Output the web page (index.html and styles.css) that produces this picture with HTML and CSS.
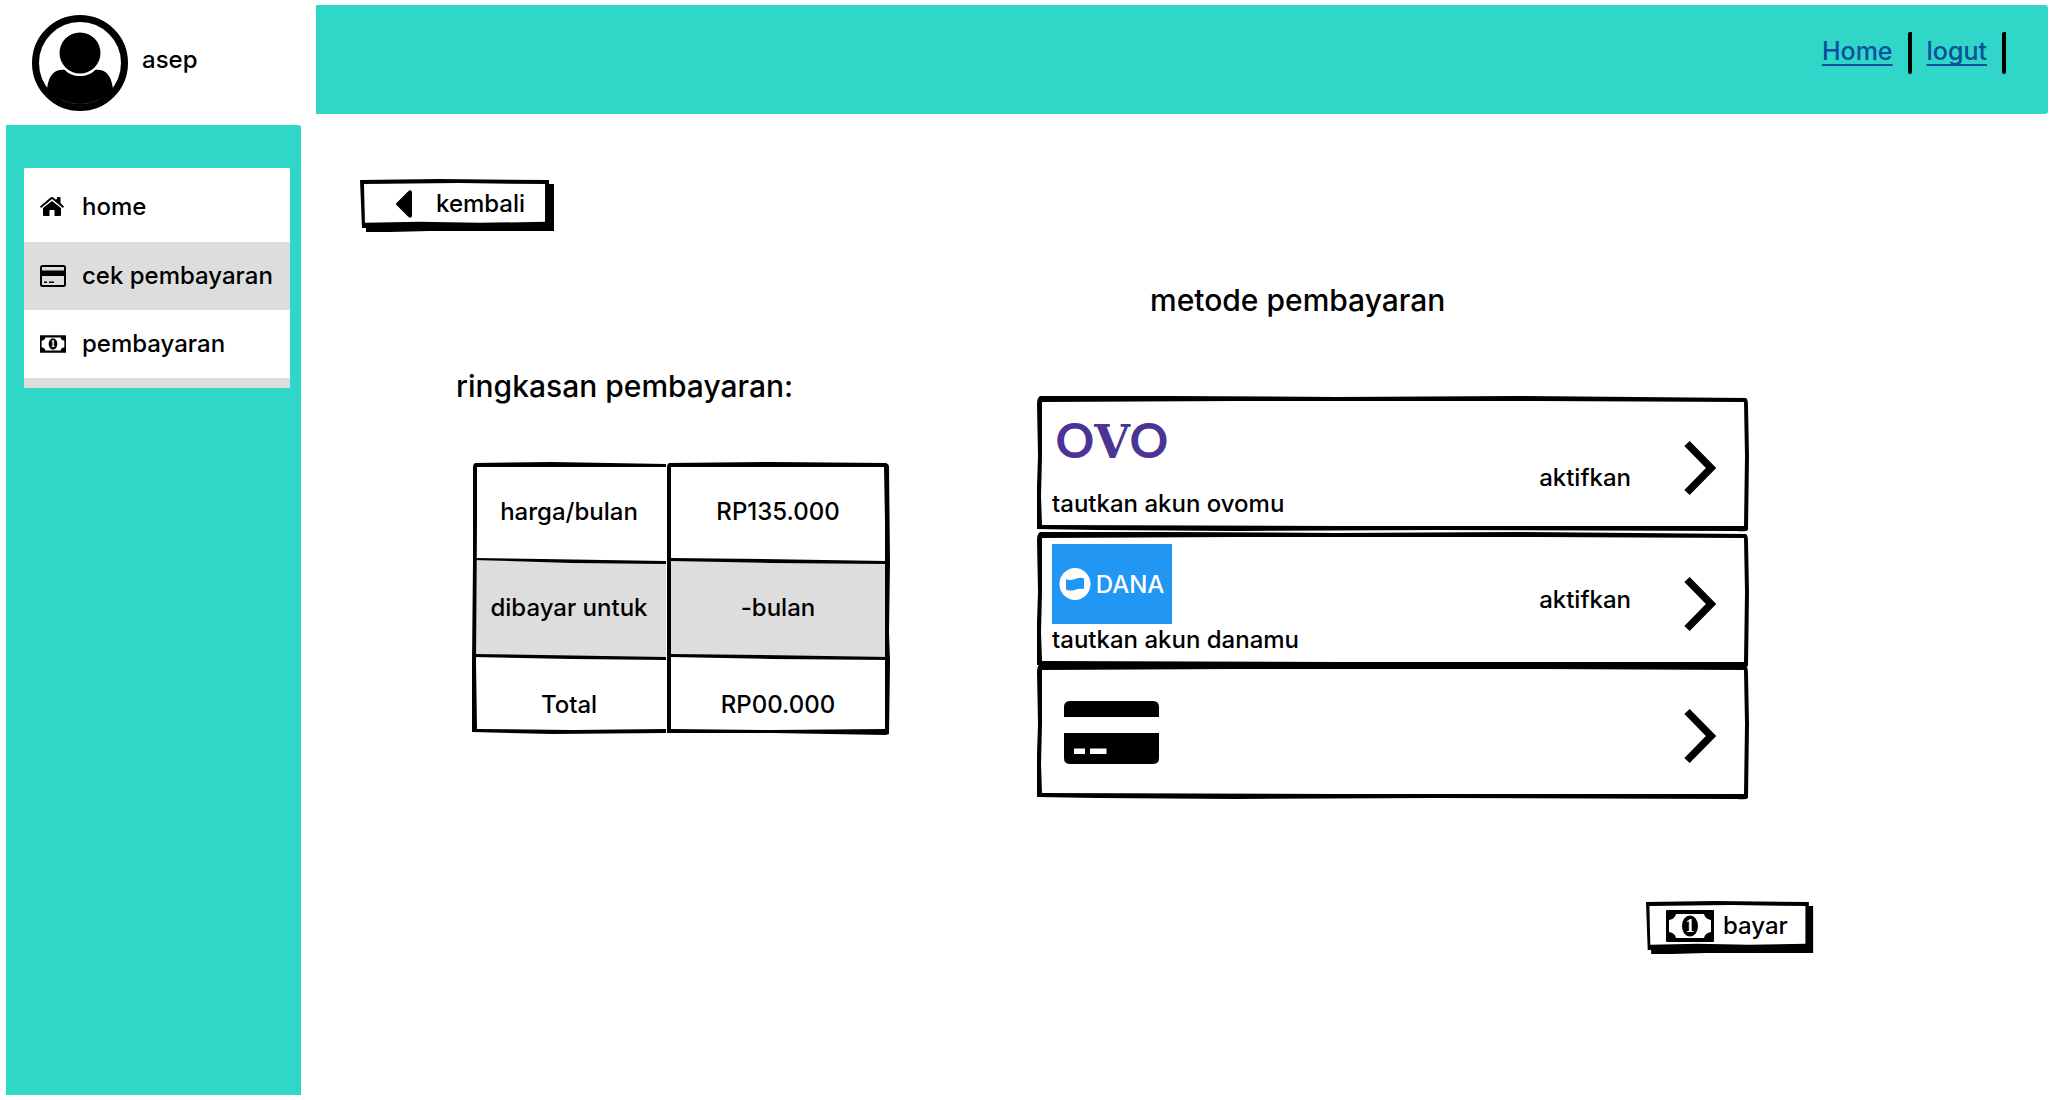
FILE: index.html
```html
<!DOCTYPE html>
<html lang="id">
<head>
<meta charset="utf-8">
<meta name="viewport" content="width=device-width, initial-scale=1">
<title>Pembayaran</title>
<link rel="stylesheet" href="styles.css">
</head>
<body>
<svg class="defs" aria-hidden="true">
  <symbol id="card-frame" viewBox="0 0 712 136" preserveAspectRatio="none">
    <path fill-rule="evenodd" d="M3 0L130 0L300 1L480 0L709 2Q711 3 711 10L712 60L711 134Q709 136 700 135L400 134L200 135L60 134L0 133L0 90L1 60L0 8Q0 2 3 0ZM5 6L5 60L4 100L5 129L300 130L707 130L708 60L707 6L500 5L360 5L200 5Z"/>
  </symbol>
  <symbol id="button-frame" viewBox="0 0 196 52" preserveAspectRatio="none">
    <path d="M6 5H195V51L70 51L30 52H6Z"/>
    <path d="M0 1L80 0L190 1V46L2 48Z"/>
    <path fill="#fff" d="M4 5L100 4L186 5V42L120 43L60 42L5 43Z"/>
  </symbol>
  <symbol id="banknote" viewBox="0 0 48 32">
    <path fill-rule="evenodd" d="M1 0H47Q48 0 48 1V31Q48 32 47 32H1Q0 32 0 31V1Q0 0 1 0ZM10 4Q9 9 3 10V22Q9 23 10 28H38Q39 23 45 22V10Q39 9 38 4Z"/>
    <ellipse cx="24" cy="16" rx="8" ry="10.500"/>
    <text x="24" y="22" text-anchor="middle" fill="#fff" font-family="Liberation Serif, serif" font-weight="700" font-size="18">1</text>
  </symbol>
  <symbol id="chevron" viewBox="0 0 32 56">
    <path d="M3 3.500L27 28L3 52.500" fill="none" stroke="#000" stroke-width="7.500"/>
  </symbol>
</svg>

<div class="page">
  <aside class="side">
    <div class="user">
      <svg class="avatar" viewBox="0 0 96 96" role="img" aria-label="Foto profil">
        <circle cx="48" cy="48" r="44.500" fill="#fff" stroke="#000" stroke-width="7"/>
        <circle cx="48" cy="38" r="20.500"/>
        <path d="M15 74C17 58 24 54 33 55C40 63 56 63 63 55C72 54 79 58 81 74A44 44 0 0 1 15 74Z"/>
      </svg>
      <span>asep</span>
    </div>
    <div class="panel">
      <nav class="menu" aria-label="Menu">
        <a class="menu-item menu-item--first" href="#home">
          <svg class="menu-icon" viewBox="0 0 26 22" aria-hidden="true"><path d="M17 3V1H20.500V7L24 10.500L23 12L12 3L1 12L0 10.500L10.500 1.500Q12 .500 13.500 1.500L15.500 3.500Z"/><path d="M12 5L21 12V19Q21 20 20 20H14.500V14H9.500V20H4Q3 20 3 19V12Z"/></svg>
          <span>home</span>
        </a>
        <a class="menu-item menu-item--alt" href="#cek">
          <svg class="menu-icon" viewBox="0 0 26 22" aria-hidden="true"><rect x="1" y="1" width="24" height="20" rx="1.500" fill="none" stroke="#000" stroke-width="2"/><path d="M1 5.500H25V11H1ZM4 16.500H7V18H4ZM9 16.500H14V18H9Z"/></svg>
          <span>cek pembayaran</span>
        </a>
        <a class="menu-item" href="#pembayaran">
          <svg class="menu-icon" aria-hidden="true"><use href="#banknote"/></svg>
          <span>pembayaran</span>
        </a>
      </nav>
    </div>
  </aside>

  <div class="body">
    <header class="topbar">
      <a href="#home">Home</a><span class="bar"></span>
      <a href="#logut">logut</a><span class="bar"></span>
    </header>
    <main class="content">
      <button class="btn btn--back" type="button">
        <svg class="frame" aria-hidden="true"><use href="#button-frame"/></svg>
        <svg class="back-icon" viewBox="0 0 16 28" aria-hidden="true"><path d="M1 12.500L12.500 1Q15 -1 16 2V26Q15 29 12.500 27L1 15.500Q-1 14 1 12.500Z"/></svg>
        <span>kembali</span>
      </button>
      <div class="columns">
        <section class="summary">
          <h2>ringkasan pembayaran:</h2>
          <div class="table-wrap">
            <svg class="frame" viewBox="0 0 418 274" preserveAspectRatio="none" aria-hidden="true">
              <path fill="#ddd" d="M1 97L194 101V196L1 193ZM198 97L414 101V196L198 193Z"/>
              <path d="M3 1L80 0L194 2V5L120 5L5 5L5 60L4 200L5 267L100 268L194 267V271L80 272L0 270L0 200L1 100L1 5Q1 2 3 1Z"/>
              <path d="M197 1L300 0L414 1Q417 2 417 5L418 100L417 170L418 200L417 272L414 273L300 271L195 271V200L195 100L195 5Q195 2 197 1ZM199 5V60L199 267L300 268L413 267V60L412 5L300 5Z" fill-rule="evenodd"/>
              <path d="M1 96L70 97L194 99V102L100 101L1 98ZM198 96L290 97L414 99V102L300 101L198 99ZM1 192L70 193L194 195V198L100 197L1 195ZM198 192L290 193L418 195V198L300 197L198 195Z"/>
            </svg>
            <table>
              <tr><th scope="row">harga/bulan</th><td>RP135.000</td></tr>
              <tr><th scope="row">dibayar untuk</th><td>-bulan</td></tr>
              <tr class="last"><th scope="row">Total</th><td>RP00.000</td></tr>
            </table>
          </div>
        </section>
        <section class="methods">
          <h2>metode pembayaran</h2>
          <ul class="cards">
            <li class="card card--ovo">
              <svg class="frame" aria-hidden="true"><use href="#card-frame"/></svg>
              <div class="brand">
                <svg class="logo" viewBox="0 0 120 80" role="img" aria-label="OVO"><text class="ovo" y="50" text-anchor="middle"><tspan x="23">O</tspan><tspan class="ovo-v" x="60">V</tspan><tspan x="97">O</tspan></text></svg>
                <span>tautkan akun ovomu</span>
              </div>
              <span class="status">aktifkan</span>
              <button class="go" type="button" aria-label="Pilih OVO"><svg><use href="#chevron"/></svg></button>
            </li>
            <li class="card">
              <svg class="frame" aria-hidden="true"><use href="#card-frame"/></svg>
              <div class="brand">
                <svg class="logo" viewBox="0 0 120 80" role="img" aria-label="DANA">
                  <rect width="120" height="80" fill="#2296f3"/>
                  <ellipse cx="23" cy="40" rx="15.500" ry="16" fill="#fff"/>
                  <path fill="#2296f3" d="M14 35Q18 37 23 35Q28 33 31 34Q32 34 32 35V45Q27 44 23 46Q19 47 15 46Q14 46 14 45Z"/>
                  <text class="dana" x="78" y="49" text-anchor="middle">DANA</text>
                </svg>
                <span>tautkan akun danamu</span>
              </div>
              <span class="status">aktifkan</span>
              <button class="go" type="button" aria-label="Pilih DANA"><svg><use href="#chevron"/></svg></button>
            </li>
            <li class="card card--credit">
              <svg class="frame" aria-hidden="true"><use href="#card-frame"/></svg>
              <div class="brand">
                <svg class="logo logo--card" viewBox="0 0 120 112" role="img" aria-label="Kartu kredit"><path d="M12 41V31Q12 25 18 25H101Q107 25 107 31V41ZM12 57H107V82Q107 88 101 88H18Q12 88 12 82Z"/><path fill="#fff" d="M22 72.500H33V78H22ZM38 72.500H54.500V78H38Z"/></svg>
              </div>
              <button class="go" type="button" aria-label="Pilih kartu"><svg><use href="#chevron"/></svg></button>
            </li>
          </ul>
          <button class="btn btn--pay" type="button">
            <svg class="frame" aria-hidden="true"><use href="#button-frame"/></svg>
            <svg class="pay-icon" aria-hidden="true"><use href="#banknote"/></svg>
            <span>bayar</span>
          </button>
        </section>
      </div>
    </main>
  </div>
</div>
</body>
</html>
```
FILE: styles.css
```css
* { box-sizing: border-box; }
body {
  margin: 0;
  background: #fff;
  color: #000;
  font: 500 24px/32px Inter, "Open Sans", sans-serif;
}
h2 { margin: 0; font-size: 30px; line-height: 40px; font-weight: 500; white-space: nowrap; }
button { font: inherit; color: inherit; background: none; border: 0; padding: 0; cursor: pointer; }
svg { display: block; }
.defs { display: none; }

.page {
  display: grid;
  grid-template-columns: 295px 1fr;
  gap: 15px;
  min-height: 100vh;
  padding: 5px 6px;
}

.side { display: flex; flex-direction: column; }
.user {
  display: flex;
  align-items: center;
  gap: 14px;
  height: 120px;
  padding: 0 26px 4px;
}
.user span { padding-bottom: 6px; }
.avatar { width: 96px; height: 96px; }
.panel {
  flex: 1;
  padding: 43px 11px 0 18px;
  background: #30d6c8;
  border-radius: 0 3px 0 0;
}
.menu {
  background: #fff;
  border-bottom: 10px solid #ddd;
}
.menu-item {
  display: flex;
  align-items: center;
  gap: 16px;
  height: 68px;
  padding-left: 16px;
  color: inherit;
  text-decoration: none;
  white-space: nowrap;
}
.menu-item--first { height: 74px; padding-top: 4px; }
.menu-item--alt { background: #ddd; }
.menu-icon { width: 26px; height: 22px; flex: none; }

.topbar {
  display: flex;
  justify-content: flex-end;
  gap: 13px;
  height: 109px;
  padding: 27px 42px 0 0;
  background: #30d6c8;
  border-radius: 0 3px 3px 0;
  font-size: 25px;
}
.topbar a {
  align-self: flex-start;
  padding: 3px 2px;
  color: #0b4f9c;
  text-decoration-thickness: 2px;
  text-underline-offset: 4px;
  text-decoration-skip-ink: none;
}
.bar { width: 4px; height: 42px; background: #000; border-radius: 2px 0 2px 2px; }

.content { padding: 65px 44px 0; }
.frame { position: absolute; inset: 0; width: 100%; height: 100%; z-index: -1; }
.btn {
  position: relative;
  z-index: 0;
  display: flex;
  align-items: center;
  height: 53px;
  padding-bottom: 3px;
}
.btn--back { width: 195px; padding-left: 36px; gap: 24px; }
.back-icon { width: 16px; height: 28px; }

.columns {
  display: grid;
  grid-template-columns: 677fr 967fr;
  padding-top: 48px;
}
.summary { padding: 86px 0 0 96px; }
.table-wrap {
  position: relative;
  z-index: 0;
  width: 418px;
  margin: 56px 0 0 16px;
}
table { width: 100%; border-collapse: collapse; table-layout: fixed; }
th, td { height: 96px; padding: 4px 0 0; font-weight: 500; text-align: center; white-space: nowrap; }
th { width: 194px; }
.last th, .last td { height: 82px; padding-top: 20px; }

.methods { display: flex; flex-direction: column; }
.methods h2 { padding-left: 113px; }
.cards {
  width: 712px;
  max-width: 100%;
  margin: 76px 0 0;
  padding: 0;
  list-style: none;
}
.card {
  position: relative;
  z-index: 0;
  display: flex;
  align-items: center;
  height: 136px;
  padding: 0 33px 0 15px;
}
.card--credit { margin-top: -4px; }
.brand { flex: 1; }
.logo { width: 120px; height: 80px; }
.logo--card { height: 112px; }
.ovo { font: 700 48px Lato, sans-serif; fill: #4c3494; }
.ovo-v { font: 700 46px "DejaVu Serif", serif; }
.dana { font: 500 24px Inter, sans-serif; fill: #fff; }
.status { padding-right: 53px; }
.card--ovo .status { padding-top: 28px; }
.go { padding-top: 8px; }
.go svg { width: 32px; height: 56px; }
.btn--pay { width: 168px; margin: 101px 0 0 609px; padding-left: 20px; gap: 9px; }
.pay-icon { width: 48px; height: 32px; }
```
